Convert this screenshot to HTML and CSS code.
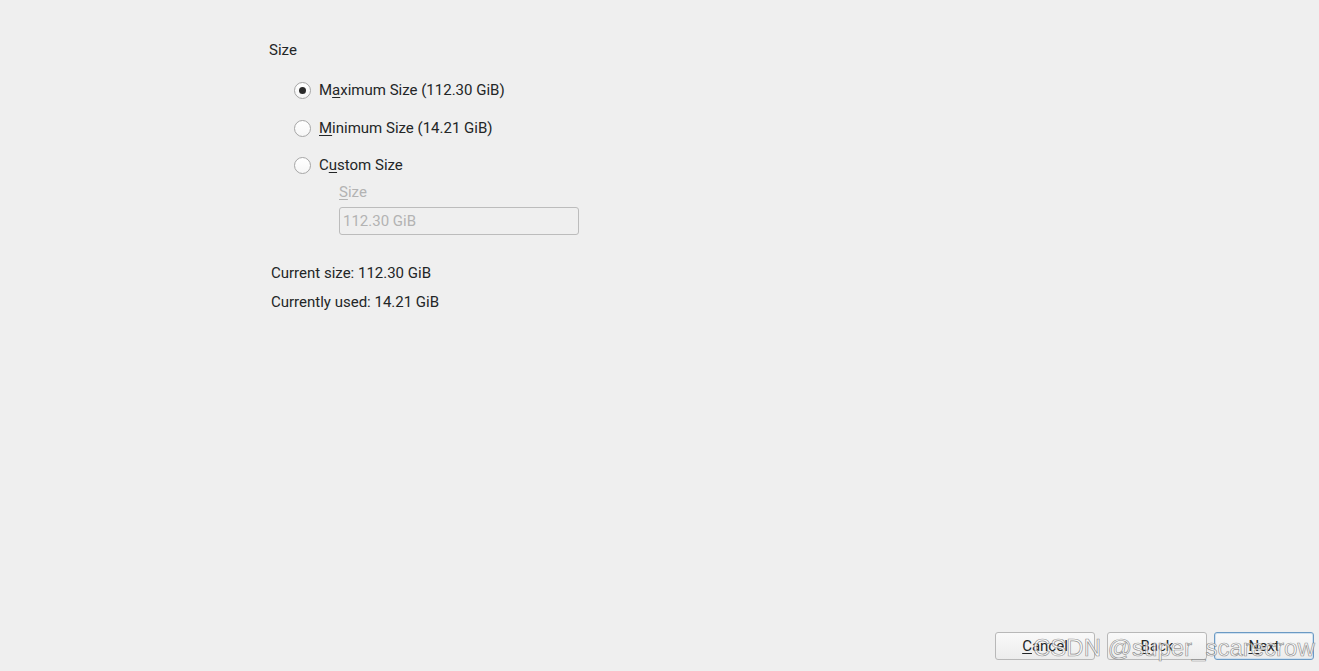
FILE: index.html
```html
<!DOCTYPE html>
<html>
<head>
<meta charset="utf-8">
<link rel="stylesheet" href="styles.css">
</head>
<body>
<div class="page">
  <main class="content">
    <div class="section-title">Size</div>
    <div class="options">
      <label class="option"><span class="radio checked"></span><span>M<u>a</u>ximum Size (112.30 GiB)</span></label>
      <label class="option"><span class="radio"></span><span><u>M</u>inimum Size (14.21 GiB)</span></label>
      <label class="option tight"><span class="radio"></span><span>C<u>u</u>stom Size</span></label>
      <div class="custom">
        <div class="custom-label"><u>S</u>ize</div>
        <div class="field">112.30 GiB</div>
      </div>
    </div>
    <div class="info">
      <div>Current size: 112.30 GiB</div>
      <div>Currently used: 14.21 GiB</div>
    </div>
  </main>
  <footer class="buttons">
    <button class="btn"><u>C</u>ancel</button>
    <button class="btn gap"><u>B</u>ack</button>
    <button class="btn primary"><u>N</u>ext</button>
  </footer>
  <div class="watermark">CSDN @super_scarecrow</div>
</div>
</body>
</html>
```

FILE: styles.css
```css
html, body {
  margin: 0;
  padding: 0;
  background: #efefef;
}
body {
  font-family: Roboto, "Noto Sans", sans-serif;
  font-size: 15px;
  color: #232627;
}
.page {
  position: relative;
  width: 1319px;
  height: 671px;
  display: flex;
  flex-direction: column;
  overflow: hidden;
}
.content {
  flex: 1;
  padding: 41px 0 0 269px;
  display: flex;
  flex-direction: column;
}
.section-title {
  line-height: 18px;
}
.options {
  padding: 22px 0 0 25px;
  display: flex;
  flex-direction: column;
  gap: 20px;
}
.option {
  display: flex;
  align-items: center;
  gap: 8px;
  line-height: 18px;
}
.option.tight {
  margin-top: -1px;
}
.radio {
  width: 15px;
  height: 15px;
  border-radius: 50%;
  border: 1px solid #a6a6a6;
  background: linear-gradient(#ffffff, #f6f6f6);
  display: flex;
  align-items: center;
  justify-content: center;
  box-sizing: content-box;
}
.radio.checked::after {
  content: "";
  width: 7px;
  height: 7px;
  border-radius: 50%;
  background: #2b2b2b;
}
u {
  text-decoration-thickness: 1px;
  text-underline-offset: 2px;
}
.custom {
  margin: -10px 0 0 45px;
  display: flex;
  flex-direction: column;
  gap: 7px;
  color: #b3b3b3;
}
.custom-label {
  line-height: 16px;
}
.field {
  width: 235px;
  height: 26px;
  border: 1px solid #bcbcbc;
  border-radius: 3px;
  padding-left: 3px;
  line-height: 26px;
  background: #efefef;
}
.info {
  padding: 29px 0 0 2px;
  display: flex;
  flex-direction: column;
  gap: 11px;
  line-height: 18px;
}
.buttons {
  display: flex;
  justify-content: flex-end;
  padding: 0 5px 11px 0;
  gap: 7px;
}
.btn {
  width: 100px;
  height: 28px;
  font-family: Roboto, "Noto Sans", sans-serif;
  font-size: 15px;
  color: #232627;
  border: 1px solid #b8b8b8;
  border-radius: 3px;
  background: linear-gradient(#f9f9f9, #ececec);
  padding: 0;
}
.btn.gap {
  margin-left: 5px;
}
.btn.primary {
  border-color: #6b9ac4;
  box-shadow: inset 0 0 0 1px #cfe0ef;
}
.watermark {
  position: absolute;
  left: 1033px;
  top: 634px;
  font-family: "Liberation Sans", sans-serif;
  font-size: 24px;
  color: rgba(255, 255, 255, 0.75);
  -webkit-text-stroke: 0.7px rgba(120, 120, 120, 0.8);
  white-space: nowrap;
}
```
